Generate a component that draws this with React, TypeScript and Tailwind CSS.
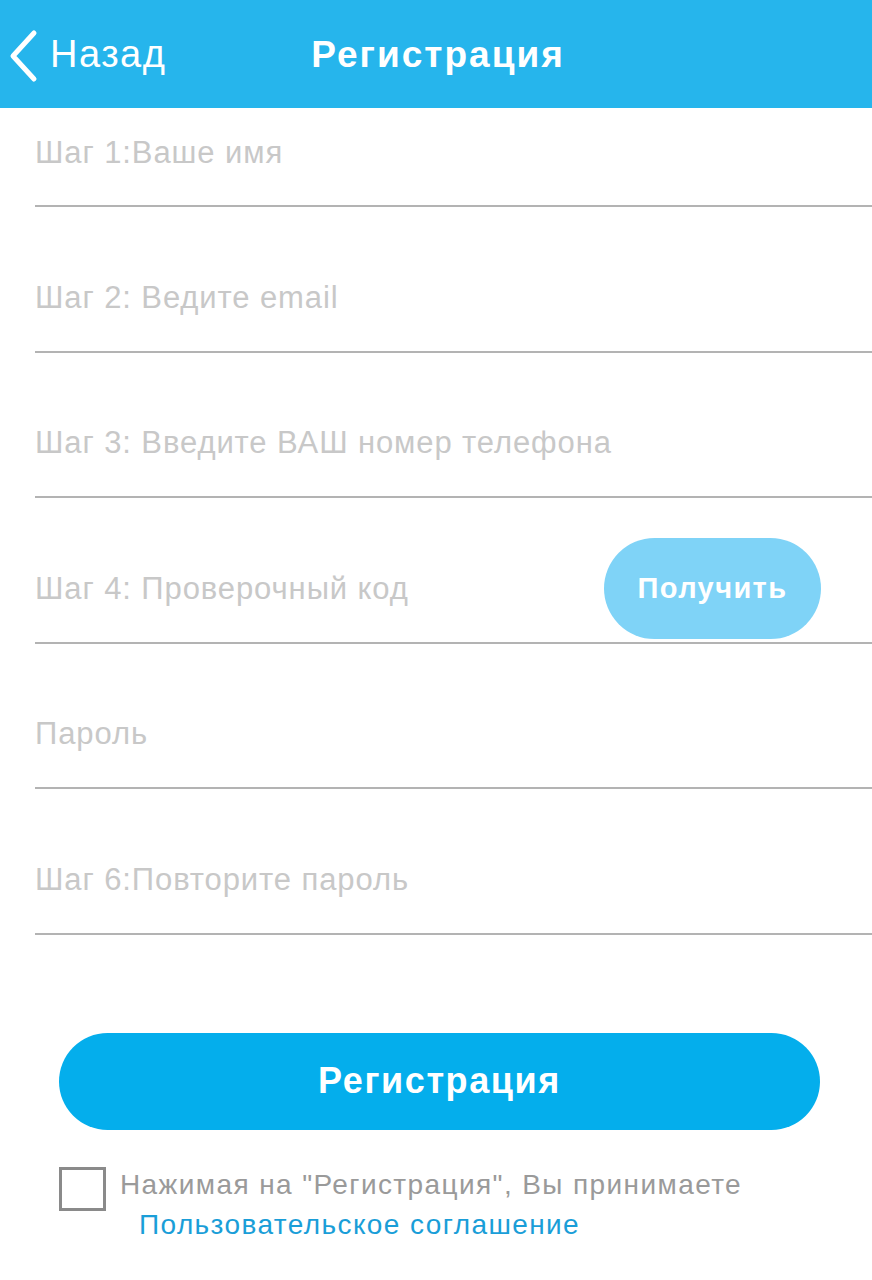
import React from 'react';

const fields = [
  { label: 'Шаг 2: Ведите email' },
  { label: 'Шаг 3: Введите ВАШ номер телефона' },
  { label: 'Шаг 4: Проверочный код', action: 'Получить' },
  { label: 'Пароль' },
  { label: 'Шаг 6:Повторите пароль' },
];

function Field({ label, action, first }: { label: string; action?: string; first?: boolean }) {
  return (
    <div
      className={`ml-[35px] flex items-center justify-between border-b-2 border-[#b3b3b3] pr-[51px] ${
        first ? 'h-[99px] pb-[6px]' : 'h-[145.5px] pt-[38px]'
      }`}
    >
      <span className="text-[31px] tracking-[0.9px] text-[#c8c8c8]">{label}</span>
      {action && (
        <button className="h-[101px] w-[217px] rounded-full bg-[#7fd3f7] text-[29px] font-bold tracking-[1.4px] text-white">
          {action}
        </button>
      )}
    </div>
  );
}

export default function App() {
  return (
    <div className="min-h-[1280px] w-[872px] bg-white font-['Liberation_Sans',Arial,sans-serif]">
      <header className="relative flex h-[108px] items-center bg-[#26b5ec] text-white">
        <div className="flex items-center pl-[8px]">
          <svg width="30" height="54" viewBox="0 0 30 54" fill="none" className="mt-[4px]">
            <path d="M26 4 L5 27 L26 50" stroke="white" strokeWidth="5" strokeLinecap="round" strokeLinejoin="round" />
          </svg>
          <span className="ml-[12px] text-[38px] leading-none tracking-[1.5px]">Назад</span>
        </div>
        <h1 className="absolute left-1/2 -translate-x-1/2 pl-[4px] text-[37px] font-bold leading-none tracking-[2px]">
          Регистрация
        </h1>
      </header>

      <Field label="Шаг 1:Ваше имя" first />
      {fields.map((f, i) => (
        <Field key={i} label={f.label} action={f.action} />
      ))}

      <div className="mt-[98px] pl-[59px]">
        <button className="h-[97px] w-[761px] rounded-full bg-[#04aeec] text-[36px] font-bold tracking-[1.6px] text-white">
          Регистрация
        </button>
      </div>

      <div className="mt-[37px] flex pl-[59px]">
        <div className="h-[44px] w-[47px] shrink-0 border-[3px] border-[#8a8a8a]" />
        <div className="ml-[14px]">
          <div className="text-[28px] leading-[36px] tracking-[1.4px] text-[#9a9a9a]">
            Нажимая на "Регистрация", Вы принимаете
          </div>
          <div className="ml-[19px] mt-[4px] text-[28px] leading-[36px] tracking-[1.4px] text-[#1a9ed8]">
            Пользовательское соглашение
          </div>
        </div>
      </div>
    </div>
  );
}
